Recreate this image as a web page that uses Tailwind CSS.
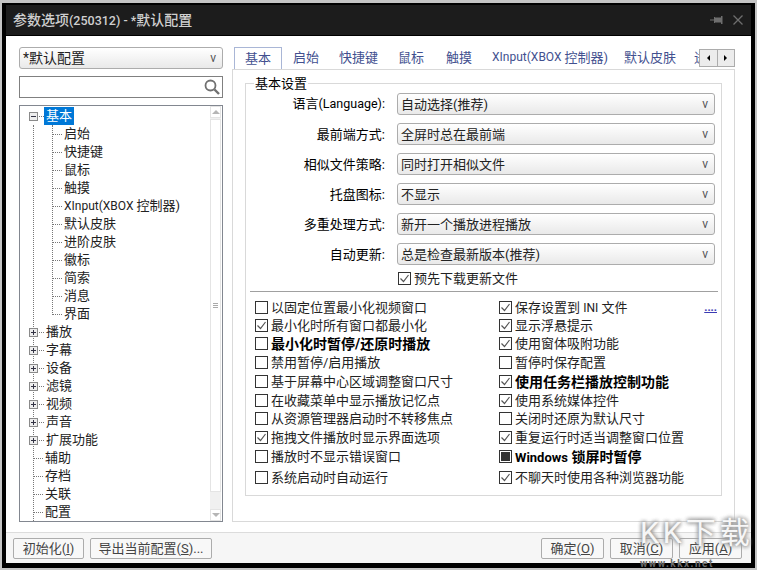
<!DOCTYPE html>
<html lang="zh-CN">
<head>
    <meta charset="UTF-8">
    <title>参数选项</title>
    <script src="https://cdn.jsdelivr.net/npm/@tailwindcss/browser@4"></script>
</head>
<body class="w-[757px] h-[570px] overflow-hidden bg-[#c4c4c4] font-['Roboto','Noto_Sans_CJK_SC',sans-serif] text-[13px] leading-none text-[#222]">
<div class="relative w-[757px] h-[570px] overflow-hidden pt-[3px] pr-[2px] pb-[2px] pl-[2px]">
    <div class="flex flex-col h-full border-x-4 border-b-[5px] border-t-2 border-black bg-white">

        <!-- title bar -->
        <header class="flex items-center h-[31px] shrink-0 bg-[#1c1c1c] border-b border-black pl-[7px] pr-[8px]">
            <h1 class="flex-1 text-[14px] font-medium text-[#cfcfcf]">参数选项<span class="text-[12.5px]">(250312) - *</span>默认配置</h1>
            <svg class="w-[13px] h-[12px] mr-[10px]" viewBox="0 0 13 12" fill="#6e6e6e"><path d="M0 5.500h4v1H0zM4 3h1v6H4zM5 3.500h6v5H5zM11 2h1.500v8H11z"/></svg>
            <svg class="w-[10px] h-[10px]" viewBox="0 0 10 10" fill="none" stroke="#6e6e6e" stroke-width="1.300"><path d="M0.500 0.500l9 9M9.500 0.500l-9 9"/></svg>
        </header>

        <div class="flex flex-1 min-h-0 pt-[11px] pl-[13px] pr-[16px] pb-[10px]">
            <!-- left column -->
            <div class="flex flex-col w-[204px] shrink-0 gap-[7px]">
                <div class="flex items-center justify-between h-[22px] pl-[3px] pr-[6px] rounded-[3px] border border-[#acacac] bg-gradient-to-b from-white to-[#e9e9e9] text-[14px]">
                    <span>*默认配置</span><span class="text-[12px] text-[#555]">v</span>
                </div>
                <div class="flex items-center justify-end h-[22px] pr-[2px] border border-[#808080] bg-white">
                    <svg class="w-[16px] h-[16px]" viewBox="0 0 16 16" fill="none" stroke="#707070"><circle cx="6.500" cy="6.500" r="5" stroke-width="1.800"/><path d="M10.500 10.500l4.500 4.500" stroke-width="2.400"/></svg>
                </div>
                <div class="flex flex-1 min-h-0 border border-[#828790] bg-white">
                    <div class="relative flex-1 pt-[1px]">
                        <div class="absolute left-[13px] top-[19px] bottom-0 border-l border-dotted border-[#777]"></div>
                        <div class="absolute left-[32px] top-[19px] h-[190px] border-l border-dotted border-[#777]"></div>

                        <div class="relative flex items-center h-[18px] pl-[9px]"><span class="flex items-center justify-center w-[9px] h-[9px] border border-[#8a8a8a] bg-[#eee] text-[#333]"><span class="w-[5px] h-px bg-[#334]"></span></span><span class="w-[5px] ml-px border-t border-dotted border-[#777]"></span><span class="flex items-center h-[18px] px-[2px] pb-[2px] bg-[#0078d7] text-white">基本</span></div>
                        <div class="relative flex items-center h-[18px] pl-[33px]"><span class="w-[9px] border-t border-dotted border-[#777]"></span><span class="px-[2px] pb-[2px]">启始</span></div>
                        <div class="relative flex items-center h-[18px] pl-[33px]"><span class="w-[9px] border-t border-dotted border-[#777]"></span><span class="px-[2px] pb-[2px]">快捷键</span></div>
                        <div class="relative flex items-center h-[18px] pl-[33px]"><span class="w-[9px] border-t border-dotted border-[#777]"></span><span class="px-[2px] pb-[2px]">鼠标</span></div>
                        <div class="relative flex items-center h-[18px] pl-[33px]"><span class="w-[9px] border-t border-dotted border-[#777]"></span><span class="px-[2px] pb-[2px]">触摸</span></div>
                        <div class="relative flex items-center h-[18px] pl-[33px]"><span class="w-[9px] border-t border-dotted border-[#777]"></span><span class="px-[2px] pb-[2px]"><span class="text-[12px]">XInput(XBOX </span>控制器)</span></div>
                        <div class="relative flex items-center h-[18px] pl-[33px]"><span class="w-[9px] border-t border-dotted border-[#777]"></span><span class="px-[2px] pb-[2px]">默认皮肤</span></div>
                        <div class="relative flex items-center h-[18px] pl-[33px]"><span class="w-[9px] border-t border-dotted border-[#777]"></span><span class="px-[2px] pb-[2px]">进阶皮肤</span></div>
                        <div class="relative flex items-center h-[18px] pl-[33px]"><span class="w-[9px] border-t border-dotted border-[#777]"></span><span class="px-[2px] pb-[2px]">徽标</span></div>
                        <div class="relative flex items-center h-[18px] pl-[33px]"><span class="w-[9px] border-t border-dotted border-[#777]"></span><span class="px-[2px] pb-[2px]">简索</span></div>
                        <div class="relative flex items-center h-[18px] pl-[33px]"><span class="w-[9px] border-t border-dotted border-[#777]"></span><span class="px-[2px] pb-[2px]">消息</span></div>
                        <div class="relative flex items-center h-[18px] pl-[33px]"><span class="w-[9px] border-t border-dotted border-[#777]"></span><span class="px-[2px] pb-[2px]">界面</span></div>

                        <div class="relative flex items-center h-[18px] pl-[9px]"><span class="relative flex items-center justify-center w-[9px] h-[9px] border border-[#8a8a8a] bg-[#eee]"><span class="w-[5px] h-px bg-[#334]"></span><span class="absolute w-px h-[5px] bg-[#334]"></span></span><span class="w-[5px] ml-px border-t border-dotted border-[#777]"></span><span class="px-[2px] pb-[2px]">播放</span></div>
                        <div class="relative flex items-center h-[18px] pl-[9px]"><span class="relative flex items-center justify-center w-[9px] h-[9px] border border-[#8a8a8a] bg-[#eee]"><span class="w-[5px] h-px bg-[#334]"></span><span class="absolute w-px h-[5px] bg-[#334]"></span></span><span class="w-[5px] ml-px border-t border-dotted border-[#777]"></span><span class="px-[2px] pb-[2px]">字幕</span></div>
                        <div class="relative flex items-center h-[18px] pl-[9px]"><span class="relative flex items-center justify-center w-[9px] h-[9px] border border-[#8a8a8a] bg-[#eee]"><span class="w-[5px] h-px bg-[#334]"></span><span class="absolute w-px h-[5px] bg-[#334]"></span></span><span class="w-[5px] ml-px border-t border-dotted border-[#777]"></span><span class="px-[2px] pb-[2px]">设备</span></div>
                        <div class="relative flex items-center h-[18px] pl-[9px]"><span class="relative flex items-center justify-center w-[9px] h-[9px] border border-[#8a8a8a] bg-[#eee]"><span class="w-[5px] h-px bg-[#334]"></span><span class="absolute w-px h-[5px] bg-[#334]"></span></span><span class="w-[5px] ml-px border-t border-dotted border-[#777]"></span><span class="px-[2px] pb-[2px]">滤镜</span></div>
                        <div class="relative flex items-center h-[18px] pl-[9px]"><span class="relative flex items-center justify-center w-[9px] h-[9px] border border-[#8a8a8a] bg-[#eee]"><span class="w-[5px] h-px bg-[#334]"></span><span class="absolute w-px h-[5px] bg-[#334]"></span></span><span class="w-[5px] ml-px border-t border-dotted border-[#777]"></span><span class="px-[2px] pb-[2px]">视频</span></div>
                        <div class="relative flex items-center h-[18px] pl-[9px]"><span class="relative flex items-center justify-center w-[9px] h-[9px] border border-[#8a8a8a] bg-[#eee]"><span class="w-[5px] h-px bg-[#334]"></span><span class="absolute w-px h-[5px] bg-[#334]"></span></span><span class="w-[5px] ml-px border-t border-dotted border-[#777]"></span><span class="px-[2px] pb-[2px]">声音</span></div>
                        <div class="relative flex items-center h-[18px] pl-[9px]"><span class="relative flex items-center justify-center w-[9px] h-[9px] border border-[#8a8a8a] bg-[#eee]"><span class="w-[5px] h-px bg-[#334]"></span><span class="absolute w-px h-[5px] bg-[#334]"></span></span><span class="w-[5px] ml-px border-t border-dotted border-[#777]"></span><span class="px-[2px] pb-[2px]">扩展功能</span></div>
                        <div class="relative flex items-center h-[18px] pl-[14px]"><span class="w-[9px] border-t border-dotted border-[#777]"></span><span class="px-[2px] pb-[2px]">辅助</span></div>
                        <div class="relative flex items-center h-[18px] pl-[14px]"><span class="w-[9px] border-t border-dotted border-[#777]"></span><span class="px-[2px] pb-[2px]">存档</span></div>
                        <div class="relative flex items-center h-[18px] pl-[14px]"><span class="w-[9px] border-t border-dotted border-[#777]"></span><span class="px-[2px] pb-[2px]">关联</span></div>
                        <div class="relative flex items-center h-[18px] pl-[14px]"><span class="w-[9px] border-t border-dotted border-[#777]"></span><span class="px-[2px] pb-[2px]">配置</span></div>
                    </div>
                    <!-- scrollbar -->
                    <div class="flex flex-col w-[11px] shrink-0 mr-px bg-[#f0f0f0]">
                        <div class="flex items-center justify-center h-[12px] bg-white border border-[#e4e4e4]"><span class="border-x-[4px] border-b-[4px] border-x-transparent border-b-[#b5b5b5]"></span></div>
                        <div class="flex flex-col items-center justify-center gap-px h-[373px] mt-px bg-white border border-[#e4e4e4]">
                            <span class="w-[5px] h-px bg-[#aaa]"></span><span class="w-[5px] h-px bg-[#aaa]"></span><span class="w-[5px] h-px bg-[#aaa]"></span>
                        </div>
                        <div class="flex-1"></div>
                        <div class="flex items-center justify-center h-[12px] bg-white border border-[#e4e4e4]"><span class="border-x-[4px] border-t-[4px] border-x-transparent border-t-[#b5b5b5]"></span></div>
                    </div>
                </div>
            </div>

            <!-- right column -->
            <div class="flex flex-col flex-1 min-w-0 ml-[9px]">
                <div class="flex h-[22px] shrink-0">
                    <div class="flex flex-1 min-w-0 overflow-hidden text-[#42508f] pl-[2px]">
                        <span class="relative z-10 flex items-center justify-center shrink-0 w-[48px] h-[23px] pb-[2px] border border-b-0 border-[#a9b6d6] bg-white">基本</span>
                        <span class="flex items-center shrink-0 ml-[11px] pb-[2px]">启始</span>
                        <span class="flex items-center shrink-0 ml-[20px] pb-[2px]">快捷键</span>
                        <span class="flex items-center shrink-0 ml-[20px] pb-[2px]">鼠标</span>
                        <span class="flex items-center shrink-0 ml-[22px] pb-[2px]">触摸</span>
                        <span class="flex items-center shrink-0 ml-[20px] pb-[2px] whitespace-pre"><span class="text-[12px]">XInput(XBOX </span>控制器)</span>
                        <span class="flex items-center shrink-0 ml-[16px] pb-[2px]">默认皮肤</span>
                        <span class="flex items-center shrink-0 ml-[18px] pb-[2px]">进阶皮肤</span>
                    </div>
                    <div class="flex w-[36px] h-[18px] mt-[2px] shrink-0 border border-[#acacac] bg-[#ececec]">
                        <span class="flex flex-1 items-center justify-center border-r border-[#acacac]"><span class="border-y-[3px] border-r-[3px] border-y-transparent border-r-black"></span></span>
                        <span class="flex flex-1 items-center justify-center"><span class="border-y-[3px] border-l-[3px] border-y-transparent border-l-black"></span></span>
                    </div>
                </div>

                <div class="flex-1 min-h-0 border border-[#d9d9d9] bg-white pt-[7px] px-[12px]">
                    <fieldset class="border border-[#d9d9d9]">
                        <legend class="ml-[8px] px-px text-black">基本设置</legend>
                        <div class="flex items-center h-[22px] mt-[3px]">
                            <label class="w-[139px] text-right text-black">语言<span class="text-[12.5px]">(Language):</span></label>
                            <div class="flex items-center justify-between w-[318px] h-[22px] ml-[12px] pl-[3px] pr-[6px] rounded-[3px] border border-[#acacac] bg-gradient-to-b from-white to-[#e9e9e9]"><span>自动选择(推荐)</span><span class="text-[12px] text-[#555]">v</span></div>
                        </div>
                        <div class="flex items-center h-[22px] mt-[8px]">
                            <label class="w-[139px] text-right text-black">最前端方式:</label>
                            <div class="flex items-center justify-between w-[318px] h-[22px] ml-[12px] pl-[3px] pr-[6px] rounded-[3px] border border-[#acacac] bg-gradient-to-b from-white to-[#e9e9e9]"><span>全屏时总在最前端</span><span class="text-[12px] text-[#555]">v</span></div>
                        </div>
                        <div class="flex items-center h-[22px] mt-[8px]">
                            <label class="w-[139px] text-right text-black">相似文件策略:</label>
                            <div class="flex items-center justify-between w-[318px] h-[22px] ml-[12px] pl-[3px] pr-[6px] rounded-[3px] border border-[#acacac] bg-gradient-to-b from-white to-[#e9e9e9]"><span>同时打开相似文件</span><span class="text-[12px] text-[#555]">v</span></div>
                        </div>
                        <div class="flex items-center h-[22px] mt-[8px]">
                            <label class="w-[139px] text-right text-black">托盘图标:</label>
                            <div class="flex items-center justify-between w-[318px] h-[22px] ml-[12px] pl-[3px] pr-[6px] rounded-[3px] border border-[#acacac] bg-gradient-to-b from-white to-[#e9e9e9]"><span>不显示</span><span class="text-[12px] text-[#555]">v</span></div>
                        </div>
                        <div class="flex items-center h-[22px] mt-[8px]">
                            <label class="w-[139px] text-right text-black">多重处理方式:</label>
                            <div class="flex items-center justify-between w-[318px] h-[22px] ml-[12px] pl-[3px] pr-[6px] rounded-[3px] border border-[#acacac] bg-gradient-to-b from-white to-[#e9e9e9]"><span>新开一个播放进程播放</span><span class="text-[12px] text-[#555]">v</span></div>
                        </div>
                        <div class="flex items-center h-[22px] mt-[8px]">
                            <label class="w-[139px] text-right text-black">自动更新:</label>
                            <div class="flex items-center justify-between w-[318px] h-[22px] ml-[12px] pl-[3px] pr-[6px] rounded-[3px] border border-[#acacac] bg-gradient-to-b from-white to-[#e9e9e9]"><span>总是检查最新版本(推荐)</span><span class="text-[12px] text-[#555]">v</span></div>
                        </div>
                        <div class="flex items-center gap-[3px] h-[14px] mt-[6px] ml-[152px]">
                            <span class="flex items-center justify-center w-[13px] h-[13px] border border-[#333] bg-white"><svg class="w-[11px] h-[11px]" viewBox="0 0 11 11" fill="none" stroke="#555" stroke-width="1.200"><path d="M1.500 5.500l3 3 5-6.500"/></svg></span><span>预先下载更新文件</span>
                        </div>

                        <!-- options -->
                        <div class="flex w-[468px] ml-[4px] mt-[6px] mb-[7px] pt-[6px] pl-[5px] border-t border-[#a0a0a0]">
                            <div class="flex flex-col w-[244px]">
                                <div class="flex items-center gap-[3px] h-[18px]"><span class="w-[13px] h-[13px] border border-[#333] bg-white"></span><span>以固定位置最小化视频窗口</span></div>
                                <div class="flex items-center gap-[3px] h-[18px]"><span class="flex items-center justify-center w-[13px] h-[13px] border border-[#333] bg-white"><svg class="w-[11px] h-[11px]" viewBox="0 0 11 11" fill="none" stroke="#555" stroke-width="1.200"><path d="M1.500 5.500l3 3 5-6.500"/></svg></span><span>最小化时所有窗口都最小化</span></div>
                                <div class="flex items-center gap-[3px] h-[19px]"><span class="w-[13px] h-[13px] border border-[#333] bg-white"></span><span class="text-[14px] font-bold text-black">最小化时暂停/还原时播放</span></div>
                                <div class="flex items-center gap-[3px] h-[19px]"><span class="w-[13px] h-[13px] border border-[#333] bg-white"></span><span>禁用暂停/启用播放</span></div>
                                <div class="flex items-center gap-[3px] h-[19px]"><span class="w-[13px] h-[13px] border border-[#333] bg-white"></span><span>基于屏幕中心区域调整窗口尺寸</span></div>
                                <div class="flex items-center gap-[3px] h-[18px]"><span class="w-[13px] h-[13px] border border-[#333] bg-white"></span><span>在收藏菜单中显示播放记忆点</span></div>
                                <div class="flex items-center gap-[3px] h-[19px]"><span class="w-[13px] h-[13px] border border-[#333] bg-white"></span><span>从资源管理器启动时不转移焦点</span></div>
                                <div class="flex items-center gap-[3px] h-[19px]"><span class="flex items-center justify-center w-[13px] h-[13px] border border-[#333] bg-white"><svg class="w-[11px] h-[11px]" viewBox="0 0 11 11" fill="none" stroke="#555" stroke-width="1.200"><path d="M1.500 5.500l3 3 5-6.500"/></svg></span><span>拖拽文件播放时显示界面选项</span></div>
                                <div class="flex items-center gap-[3px] h-[19px]"><span class="w-[13px] h-[13px] border border-[#333] bg-white"></span><span>播放时不显示错误窗口</span></div>
                                <div class="flex items-center gap-[3px] h-[21px] mt-[1px]"><span class="w-[13px] h-[13px] border border-[#333] bg-white"></span><span>系统启动时自动运行</span></div>
                            </div>
                            <div class="flex flex-col flex-1">
                                <div class="flex items-center gap-[3px] h-[18px]"><span class="flex items-center justify-center w-[13px] h-[13px] border border-[#333] bg-white"><svg class="w-[11px] h-[11px]" viewBox="0 0 11 11" fill="none" stroke="#555" stroke-width="1.200"><path d="M1.500 5.500l3 3 5-6.500"/></svg></span><span class="flex-1">保存设置到 <span class="text-[12px]">INI</span> 文件</span><span class="text-[11px] text-[#3b3bb3] underline leading-[9px] font-bold pr-px">....</span></div>
                                <div class="flex items-center gap-[3px] h-[18px]"><span class="flex items-center justify-center w-[13px] h-[13px] border border-[#333] bg-white"><svg class="w-[11px] h-[11px]" viewBox="0 0 11 11" fill="none" stroke="#555" stroke-width="1.200"><path d="M1.500 5.500l3 3 5-6.500"/></svg></span><span>显示浮悬提示</span></div>
                                <div class="flex items-center gap-[3px] h-[19px]"><span class="flex items-center justify-center w-[13px] h-[13px] border border-[#333] bg-white"><svg class="w-[11px] h-[11px]" viewBox="0 0 11 11" fill="none" stroke="#555" stroke-width="1.200"><path d="M1.500 5.500l3 3 5-6.500"/></svg></span><span>使用窗体吸附功能</span></div>
                                <div class="flex items-center gap-[3px] h-[19px]"><span class="w-[13px] h-[13px] border border-[#333] bg-white"></span><span>暂停时保存配置</span></div>
                                <div class="flex items-center gap-[3px] h-[19px]"><span class="flex items-center justify-center w-[13px] h-[13px] border border-[#333] bg-white"><svg class="w-[11px] h-[11px]" viewBox="0 0 11 11" fill="none" stroke="#555" stroke-width="1.200"><path d="M1.500 5.500l3 3 5-6.500"/></svg></span><span class="text-[14px] font-bold text-black">使用任务栏播放控制功能</span></div>
                                <div class="flex items-center gap-[3px] h-[18px]"><span class="flex items-center justify-center w-[13px] h-[13px] border border-[#333] bg-white"><svg class="w-[11px] h-[11px]" viewBox="0 0 11 11" fill="none" stroke="#555" stroke-width="1.200"><path d="M1.500 5.500l3 3 5-6.500"/></svg></span><span>使用系统媒体控件</span></div>
                                <div class="flex items-center gap-[3px] h-[19px]"><span class="w-[13px] h-[13px] border border-[#333] bg-white"></span><span>关闭时还原为默认尺寸</span></div>
                                <div class="flex items-center gap-[3px] h-[19px]"><span class="flex items-center justify-center w-[13px] h-[13px] border border-[#333] bg-white"><svg class="w-[11px] h-[11px]" viewBox="0 0 11 11" fill="none" stroke="#555" stroke-width="1.200"><path d="M1.500 5.500l3 3 5-6.500"/></svg></span><span>重复运行时适当调整窗口位置</span></div>
                                <div class="flex items-center gap-[3px] h-[19px]"><span class="flex items-center justify-center w-[13px] h-[13px] border border-[#333] bg-white"><span class="w-[9px] h-[9px] bg-[#333]"></span></span><span class="text-[14px] font-bold text-black"><span class="text-[13px]">Windows</span> 锁屏时暂停</span></div>
                                <div class="flex items-center gap-[3px] h-[21px] mt-[1px]"><span class="flex items-center justify-center w-[13px] h-[13px] border border-[#333] bg-white"><svg class="w-[11px] h-[11px]" viewBox="0 0 11 11" fill="none" stroke="#555" stroke-width="1.200"><path d="M1.500 5.500l3 3 5-6.500"/></svg></span><span>不聊天时使用各种浏览器功能</span></div>
                            </div>
                        </div>
                    </fieldset>
                </div>
            </div>
        </div>

        <!-- footer buttons -->
        <footer class="flex items-center h-[31px] shrink-0 px-[7px] border-t border-[#dcdcdc] bg-[#f6f6f6] text-[#444]">
            <button class="w-[71px] h-[21px] rounded-[2px] border border-[#acacac] bg-[#f8f8f8]">初始化(<u>I</u>)</button>
            <button class="w-[122px] h-[21px] ml-[6px] rounded-[2px] border border-[#acacac] bg-[#f8f8f8]">导出当前配置(<u>S</u>)...</button>
            <div class="flex-1"></div>
            <button class="w-[63px] h-[21px] rounded-[2px] border border-[#acacac] bg-[#f8f8f8]">确定(<u>O</u>)</button>
            <button class="w-[63px] h-[21px] ml-[6px] rounded-[2px] border border-[#acacac] bg-[#f8f8f8]">取消(<u>C</u>)</button>
            <button class="w-[63px] h-[21px] ml-[6px] mr-[2px] rounded-[2px] border border-[#acacac] bg-[#f8f8f8]">应用(<u>A</u>)</button>
        </footer>
    </div>

    <!-- watermark over the corner of the window -->
    <div class="absolute left-[640px] top-[515px] flex flex-col w-[115px] pointer-events-none">
        <span class="h-[36px] text-[30px] font-normal leading-[36px] tracking-[4px] whitespace-nowrap text-white/90 [text-shadow:0_0_4px_#999,0_0_4px_#999,0_0_5px_#aaa]">KK下载</span>
        <span class="mt-[8px] h-[10px] text-[10px] font-bold leading-[10px] tracking-[1.500px] whitespace-nowrap text-[#6a6a6a]">www.kkx.net</span>
    </div>
</div>
</body>
</html>
